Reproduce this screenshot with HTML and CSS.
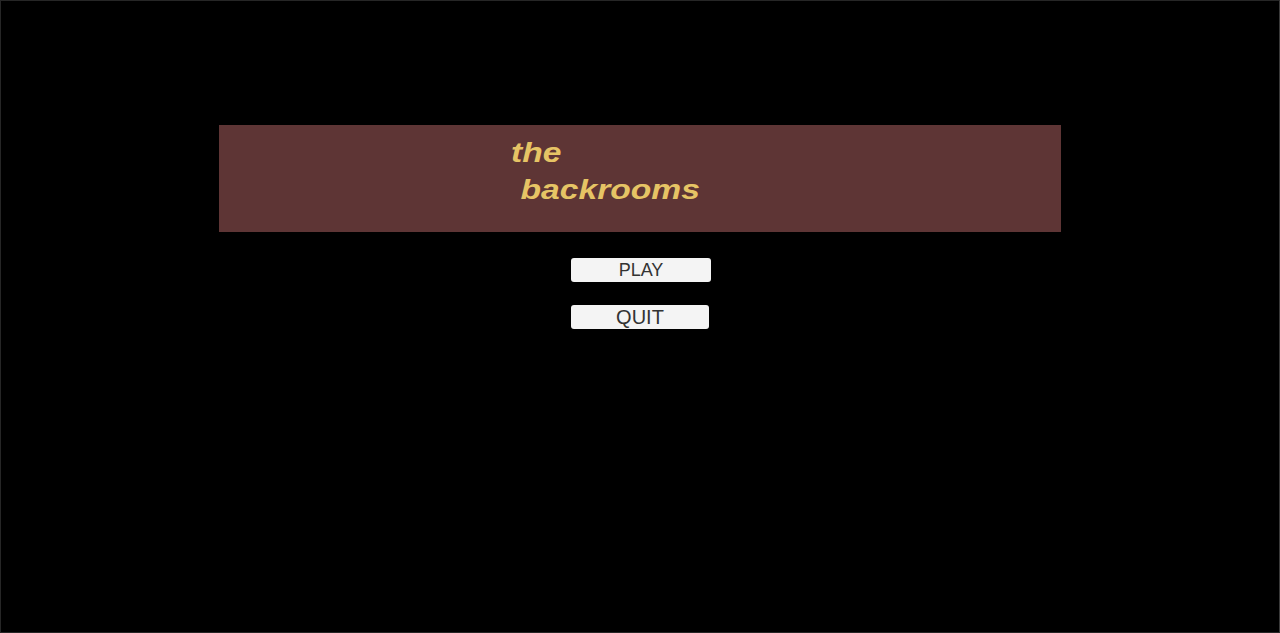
FILE: index.html
```html
<!DOCTYPE html>
<html>
<head>
<meta charset="utf-8">
<link rel="stylesheet" href="styles.css">
</head>
<body>
<div class="screen">
  <div class="banner">
    <div class="title">
      <div class="line1">the</div>
      <div class="line2">backrooms</div>
    </div>
  </div>
  <div class="menu">
    <button class="btn btn-play">PLAY</button>
    <button class="btn btn-quit">QUIT</button>
  </div>
</div>
</body>
</html>
```
FILE: styles.css
```css
html, body {
  margin: 0;
  padding: 0;
  background: #000;
}
.screen {
  box-sizing: border-box;
  width: 1280px;
  height: 633px;
  border: 1px solid #262626;
  border-right-color: #3a3a3a;
  background: #000;
  display: flex;
  flex-direction: column;
  align-items: center;
  padding-top: 124px;
}
.banner {
  width: 842px;
  height: 107px;
  background: #5e3535;
  box-sizing: border-box;
  padding-left: 292px;
  padding-top: 9px;
}
.title {
  font-family: "Liberation Sans", Arial, sans-serif;
  font-weight: bold;
  font-style: italic;
  color: #e6c465;
  font-size: 28px;
  line-height: 37px;
  transform: scaleX(1.2);
  transform-origin: left top;
}
.line2 {
  padding-left: 8px;
}
.menu {
  display: flex;
  flex-direction: column;
  align-items: center;
  margin-top: 26px;
  gap: 23px;
}
.btn {
  font-family: "Liberation Sans", Arial, sans-serif;
  font-size: 18px;
  color: #333;
  background: #f4f4f4;
  border: none;
  border-radius: 3px;
  height: 24px;
  padding: 0;
  line-height: 24px;
}
.btn-play {
  width: 140px;
  margin-left: 2px;
}
.btn-quit {
  width: 138px;
  font-size: 20px;
}
```
